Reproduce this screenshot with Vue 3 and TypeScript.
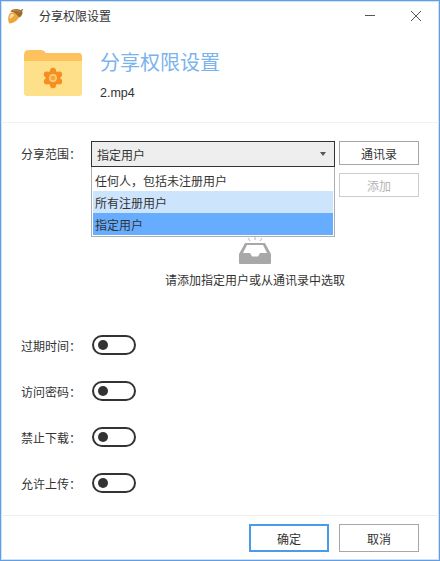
<template>
  <div class="window">
    <div class="titlebar">
      <svg class="acorn" width="18" height="18" viewBox="0 0 18 18">
        <path d="M3 6 C5.500 4.500 10 6 12 10 C11 13.500 6 16.500 2.500 16.500 C0.500 14 0.800 9 3 6Z" fill="#eea53c" />
        <path d="M3.300 8 C4 6.800 6 6.800 7.500 7.800 C6.500 9.500 4.800 11.500 2.800 12 C2.500 10.500 2.700 9 3.300 8Z" fill="#fbdf9c" />
        <path d="M3.500 4.500 C6 1 12 1.500 15 4 C16.500 6 14.500 10 12 10.500 C10 7.500 7 5 3.500 4.500Z" fill="#a06a2a" />
        <path d="M6 4 C8 3 11 3.500 13 5" stroke="#c79250" stroke-width="1" fill="none" />
        <path d="M14 3.500 L16 2.500" stroke="#8a5a24" stroke-width="1.200" />
      </svg>
      <span class="title">分享权限设置</span>
      <svg class="win-btn min" width="12" height="12" viewBox="0 0 12 12">
        <path d="M1 5.500 H11" stroke="#555" stroke-width="1" />
      </svg>
      <svg class="win-btn close" width="12" height="12" viewBox="0 0 12 12">
        <path d="M1 1 L11 11 M11 1 L1 11" stroke="#555" stroke-width="1" />
      </svg>
    </div>

    <div class="header">
      <svg class="folder" width="60" height="48" viewBox="0 0 60 48">
        <path d="M0 5 Q0 0 5 0 H17 Q20 0 22 3 H55 Q58 3 58 7 V12 H0Z" fill="#fdc25d" />
        <path d="M0 11 H58 V43 Q58 46 55 46 H3 Q0 46 0 43Z" fill="#fee08a" />
        <g fill="#f68f1f">
          <circle cx="29" cy="28" r="7.500" />
          <circle cx="29" cy="20.800" r="3" />
          <circle cx="29" cy="35.200" r="3" />
          <circle cx="22.800" cy="24.400" r="3" />
          <circle cx="35.200" cy="24.400" r="3" />
          <circle cx="22.800" cy="31.600" r="3" />
          <circle cx="35.200" cy="31.600" r="3" />
        </g>
        <circle cx="29" cy="28" r="3.200" fill="#f9a53d" stroke="#fdd27f" stroke-width="1.400" />
      </svg>
      <div class="header-text">
        <div class="heading">分享权限设置</div>
        <div class="filename">2.mp4</div>
      </div>
    </div>

    <div class="form">
      <div class="scope-row">
        <span class="label scope-label">分享范围：</span>
        <div class="scope-main">
          <div class="select-wrap">
            <div class="select">
              <span>指定用户</span>
              <i class="caret"></i>
            </div>
            <ul class="dropdown">
              <li v-for="opt in options" :key="opt.text" :class="opt.cls">{{ opt.text }}</li>
            </ul>
          </div>
          <div class="side-buttons">
            <button class="btn contacts">通讯录</button>
            <button class="btn disabled">添加</button>
          </div>
          <div class="empty">
            <svg width="36" height="28" viewBox="0 0 36 28">
              <path d="M11 1 L13 4 M18 0 V3 M25 1 L23 4" stroke="#c4c4c4" stroke-width="1.200" fill="none" />
              <path d="M8 6 H28 L34 17 V26 Q34 27 33 27 H3 Q2 27 2 26 V17Z" fill="#a8a8a8" />
              <path d="M10 8 H26 L30 16 H23 L21 19.500 H15 L13 16 H6Z" fill="#fff" />
            </svg>
            <p>请添加指定用户或从通讯录中选取</p>
          </div>
        </div>
      </div>

      <div class="toggles">
        <div v-for="name in toggles" :key="name" class="toggle-row">
          <span class="label">{{ name }}：</span>
          <span class="toggle"><i class="knob"></i></span>
        </div>
      </div>
    </div>

    <div class="footer">
      <button class="btn action primary">确定</button>
      <button class="btn action">取消</button>
    </div>
  </div>
</template>

<script setup lang="ts">
const options = [
  { text: '任何人，包括未注册用户', cls: '' },
  { text: '所有注册用户', cls: 'hover' },
  { text: '指定用户', cls: 'active' }
]

const toggles = ['过期时间', '访问密码', '禁止下载', '允许上传']
</script>

<style>
html,
body {
  margin: 0;
  background: #fff;
}
</style>

<style scoped>
.window {
  box-sizing: border-box;
  width: 440px;
  height: 561px;
  display: flex;
  flex-direction: column;
  background: #fff;
  border: 1px solid #5f9fe6;
  box-shadow: inset 0 0 0 1px #cfe2f8;
  font-family: "Noto Sans CJK SC", "Liberation Sans", sans-serif;
  font-size: 12px;
  color: #333;
}
.titlebar {
  height: 30px;
  display: flex;
  align-items: center;
  padding: 0 17px 0 6px;
  flex-shrink: 0;
}
.title {
  margin: 0 0 2px 14px;
  flex: 1;
}
.win-btn.min {
  margin-right: 34px;
}
.header {
  height: 92px;
  display: flex;
  padding: 19px 0 0 23px;
  box-sizing: border-box;
  border-bottom: 1px solid #f0f0f0;
}
.header-text {
  margin-left: 16px;
}
.heading {
  font-size: 20px;
  line-height: 28px;
  color: #7ab3ee;
  margin-top: -2px;
}
.filename {
  margin-top: 9px;
  line-height: 16px;
  font-family: "Liberation Sans", sans-serif;
  font-size: 12.500px;
}
.form {
  flex: 1;
  padding: 18px 20px 0;
}
.label {
  width: 70px;
  flex-shrink: 0;
}
.scope-row {
  display: flex;
}
.scope-label {
  line-height: 26px;
}
.scope-main {
  flex: 1;
  display: grid;
  grid-template-columns: 244px 80px;
  column-gap: 4px;
  height: 194px;
  align-content: start;
}
.select-wrap {
  position: relative;
}
.select {
  box-sizing: border-box;
  height: 26px;
  border: 1px solid #333;
  background: #eee;
  display: flex;
  align-items: center;
  justify-content: space-between;
  padding: 0 8px 0 5px;
}
.caret {
  width: 0;
  height: 0;
  border-left: 3.500px solid transparent;
  border-right: 3.500px solid transparent;
  border-top: 4px solid #555;
}
.dropdown {
  position: absolute;
  z-index: 2;
  top: 26px;
  left: 0;
  right: 0;
  margin: 0;
  padding: 0 1px 1px;
  box-sizing: border-box;
  height: 70px;
  list-style: none;
  background: #fff;
  border: 1px solid #aab0b0;
  border-top: none;
}
.dropdown li {
  height: 22px;
  line-height: 24px;
  padding-left: 2px;
}
.dropdown li:first-child {
  height: 24px;
  line-height: 28px;
}
.dropdown .hover {
  background: #cde4fd;
}
.dropdown .active {
  background: #66adff;
}
.side-buttons {
  display: flex;
  flex-direction: column;
  gap: 8px;
}
.btn {
  box-sizing: border-box;
  height: 24px;
  padding: 0;
  background: #fff;
  border: 1px solid #a6a6a6;
  font: inherit;
  color: #333;
}
.btn.disabled {
  border-color: #ccc;
  color: #b5b5b5;
}
.empty {
  grid-column: 1 / 3;
  display: flex;
  flex-direction: column;
  align-items: center;
  margin-top: 40px;
}
.empty p {
  margin: 6px 0 0;
  line-height: 18px;
}
.toggles {
  display: flex;
  flex-direction: column;
  gap: 26px;
}
.toggle-row {
  display: flex;
  align-items: center;
  height: 20px;
}
.toggle {
  box-sizing: border-box;
  width: 44px;
  height: 20px;
  border: 2px solid #333;
  border-radius: 10px;
  display: flex;
  align-items: center;
  padding-left: 4px;
  margin-left: 1px;
}
.knob {
  width: 10px;
  height: 10px;
  border-radius: 50%;
  background: #333;
}
.footer {
  height: 45px;
  flex-shrink: 0;
  box-sizing: border-box;
  border-top: 1px solid #eee;
  display: flex;
  justify-content: flex-end;
  align-items: flex-start;
  gap: 10px;
  padding: 8px 20px 0 0;
}
.action {
  width: 80px;
  height: 28px;
}
.action.primary {
  border: 2px solid #4b9be8;
}
</style>
